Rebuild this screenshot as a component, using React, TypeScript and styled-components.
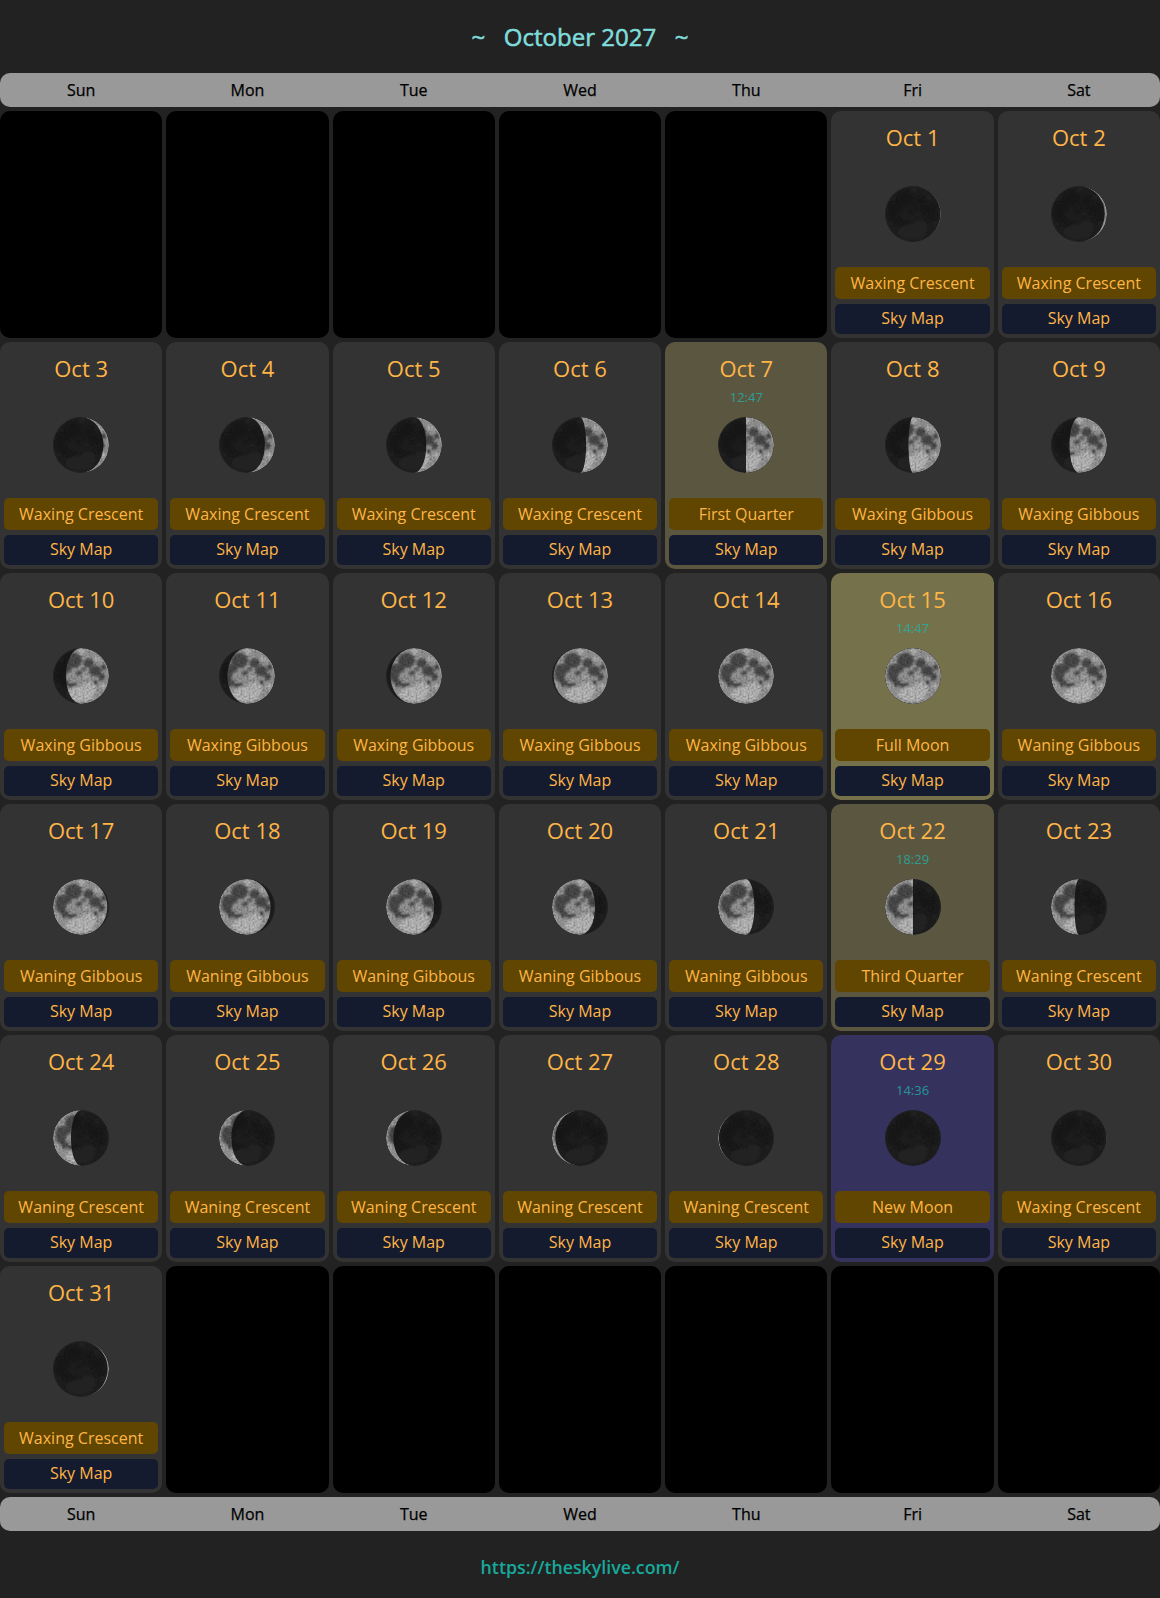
import React from "react";
import styled, { createGlobalStyle } from "styled-components";

const Global = createGlobalStyle`
  html, body { margin: 0; padding: 0; background: #222222; }
  body { font-family: "Open Sans", "Noto Sans", sans-serif; }
`;

const Page = styled.div`
  width: 1160px;
  height: 1598px;
  background: #222222;
  display: flex;
  flex-direction: column;
`;

const Title = styled.h1`
  height: 73px;
  margin: 0;
  box-sizing: border-box;
  display: flex;
  align-items: center;
  justify-content: center;
  font-size: 24px;
  font-weight: 400;
  color: #7fdcdb;
  white-space: pre;
  -webkit-text-stroke: 0.55px #7fdcdb;
`;

const WeekBar = styled.div`
  height: 34px;
  background: #999999;
  border-radius: 10px;
  display: grid;
  grid-template-columns: repeat(7, 1fr);
  column-gap: 4px;
  align-items: center;
`;

const WeekDay = styled.div`
  text-align: center;
  font-size: 16px;
  color: #000000;
  -webkit-text-stroke: 0.25px #000000;
`;

const Grid = styled.div`
  display: grid;
  grid-template-columns: repeat(7, 1fr);
  grid-auto-rows: 227px;
  gap: 4px;
  margin: 4px 0;
`;

const EmptyCell = styled.div`
  background: #000000;
  border-radius: 10px;
`;

const tones = {
  normal: "#333333",
  quarter: "#5a5640",
  full: "#75724b",
  newMoon: "#35335d",
};

type Tone = keyof typeof tones;

const DayCell = styled.div<{ $tone: Tone }>`
  background: ${(p) => tones[p.$tone]};
  border-radius: 10px;
  padding: 4px;
  box-sizing: border-box;
  display: flex;
  flex-direction: column;
  align-items: stretch;
  color: #ffb547;
`;

const DateLabel = styled.div`
  margin-top: 8px;
  height: 28px;
  line-height: 28px;
  text-align: center;
  font-size: 22px;
`;

const TimeLabel = styled.div`
  margin-top: 8px;
  height: 15px;
  line-height: 15px;
  text-align: center;
  font-size: 13px;
  color: rgba(32, 178, 170, 0.8);
`;

const MoonWrap = styled.svg`
  display: block;
  align-self: center;
  width: 56px;
  height: 56px;
  margin-top: 12px;
`;

const PhaseBadge = styled.div`
  margin-top: 25px;
  height: 32px;
  line-height: 32px;
  background: #604600;
  border-radius: 5px;
  text-align: center;
  font-size: 16px;
`;

const SkyMapLink = styled.a`
  display: block;
  margin-top: 5px;
  height: 30px;
  line-height: 28px;
  background: #151b2e;
  border-radius: 5px;
  text-align: center;
  font-size: 16px;
  color: inherit;
  text-decoration: none;
`;

const Footer = styled.div`
  flex: 1;
  display: flex;
  align-items: center;
  justify-content: center;
  padding-top: 5px;
`;

const FooterLink = styled.a`
  font-size: 17.8px;
  font-weight: 600;
  color: #17a99b;
  text-decoration: none;
`;

const maria: [number, number, number, number][] = [
  [20.6, 12.5, 8.5, 7.5],
  [35.7, 15, 5, 4.6],
  [42.2, 23, 6, 5.4],
  [50.6, 19.3, 2.4, 3],
  [8, 25, 5.5, 9],
  [14, 20, 4.5, 5],
  [12, 35, 4, 3.6],
  [20, 38.5, 4.6, 3.4],
  [26, 25, 3, 2.2],
  [48.6, 29, 3, 4],
  [42.5, 34.5, 2.2, 2.2],
  [31, 21, 2.2, 1.6],
];

const highlands: [number, number, number][] = [
  [29, 3, 3],
  [44, 11, 2.2],
  [33, 28, 1.6],
  [6, 38, 1.6],
  [50, 38, 2.2],
];

const MoonFace = ({
  day,
  base,
  edge,
  mare,
  bright,
  grain,
}: {
  day: number;
  base: string;
  edge: string;
  mare: string;
  bright: string;
  grain: boolean;
}) => (
  <g filter={grain ? `url(#grain-${day})` : undefined}>
    <circle cx="28" cy="28" r="28" fill={base} />
    <g filter={`url(#soft-${day})`}>
      {maria.map(([cx, cy, rx, ry], i) => (
        <ellipse key={i} cx={cx} cy={cy} rx={rx} ry={ry} fill={mare} />
      ))}
      <ellipse cx="27" cy="46" rx="14" ry="8" fill={bright} />
      <ellipse cx="36" cy="41" rx="7" ry="7" fill={bright} />
      {highlands.map(([cx, cy, r], i) => (
        <circle key={i} cx={cx} cy={cy} r={r} fill={bright} />
      ))}
    </g>
    <circle cx="28" cy="28" r="27.5" fill="none" stroke={edge} strokeWidth="0.8" />
  </g>
);

const Moon = ({ day, lit, waning }: { day: number; lit: number; waning: boolean }) => {
  const r = 28;
  const rx = Math.abs(1 - 2 * lit) * r;
  const sweep = lit > 0.5 ? 1 : 0;
  const d = `M28 0 A${r} ${r} 0 0 1 28 56 A${rx} ${r} 0 0 ${sweep} 28 0 Z`;
  return (
    <MoonWrap viewBox="0 0 56 56">
      <defs>
        <filter id={`soft-${day}`} x="-10%" y="-10%" width="120%" height="120%">
          <feGaussianBlur stdDeviation="1.1" />
        </filter>
        <filter id={`edge-${day}`} x="-10%" y="-10%" width="120%" height="120%">
          <feGaussianBlur stdDeviation="0.4" />
        </filter>
        <filter id={`grain-${day}`} x="0" y="0" width="100%" height="100%">
          <feTurbulence type="fractalNoise" baseFrequency="0.5" numOctaves="2" seed="4" result="n" />
          <feColorMatrix
            in="n"
            type="matrix"
            values="0 0 0 0 0  0 0 0 0 0  0 0 0 0 0  1.1 0 0 0 -0.36"
            result="dots"
          />
          <feGaussianBlur in="dots" stdDeviation="0.3" result="softDots" />
          <feComposite in="softDots" in2="SourceGraphic" operator="in" result="clipped" />
          <feMerge>
            <feMergeNode in="SourceGraphic" />
            <feMergeNode in="clipped" />
          </feMerge>
        </filter>
        <mask id={`phase-${day}`} maskUnits="userSpaceOnUse" x="0" y="0" width="56" height="56">
          <path
            d={d}
            fill="#fff"
            filter={`url(#edge-${day})`}
            transform={waning ? "translate(56 0) scale(-1 1)" : undefined}
          />
        </mask>
        <clipPath id={`disc-${day}`}>
          <circle cx="28" cy="28" r="28" />
        </clipPath>
      </defs>
      <g clipPath={`url(#disc-${day})`}>
        <MoonFace day={day} base="#1c1c1c" edge="#242424" mare="#151515" bright="#222222" grain={false} />
        <g mask={`url(#phase-${day})`}>
          <MoonFace day={day} base="#9a9a9a" edge="#a8a8a8" mare="#4e4e4e" bright="#bcbcbc" grain />
        </g>
      </g>
    </MoonWrap>
  );
};

type Day = {
  day: number;
  phase: string;
  lit: number;
  waning?: boolean;
  time?: string;
  tone?: Tone;
};

const days: Day[] = [
  { day: 1, phase: "Waxing Crescent", lit: 0.008 },
  { day: 2, phase: "Waxing Crescent", lit: 0.04 },
  { day: 3, phase: "Waxing Crescent", lit: 0.1 },
  { day: 4, phase: "Waxing Crescent", lit: 0.18 },
  { day: 5, phase: "Waxing Crescent", lit: 0.28 },
  { day: 6, phase: "Waxing Crescent", lit: 0.39 },
  { day: 7, phase: "First Quarter", lit: 0.5, time: "12:47", tone: "quarter" },
  { day: 8, phase: "Waxing Gibbous", lit: 0.58 },
  { day: 9, phase: "Waxing Gibbous", lit: 0.67 },
  { day: 10, phase: "Waxing Gibbous", lit: 0.77 },
  { day: 11, phase: "Waxing Gibbous", lit: 0.85 },
  { day: 12, phase: "Waxing Gibbous", lit: 0.92 },
  { day: 13, phase: "Waxing Gibbous", lit: 0.97 },
  { day: 14, phase: "Waxing Gibbous", lit: 0.995 },
  { day: 15, phase: "Full Moon", lit: 1, time: "14:47", tone: "full" },
  { day: 16, phase: "Waning Gibbous", lit: 0.995, waning: true },
  { day: 17, phase: "Waning Gibbous", lit: 0.97, waning: true },
  { day: 18, phase: "Waning Gibbous", lit: 0.92, waning: true },
  { day: 19, phase: "Waning Gibbous", lit: 0.86, waning: true },
  { day: 20, phase: "Waning Gibbous", lit: 0.77, waning: true },
  { day: 21, phase: "Waning Gibbous", lit: 0.65, waning: true },
  { day: 22, phase: "Third Quarter", lit: 0.5, waning: true, time: "18:29", tone: "quarter" },
  { day: 23, phase: "Waning Crescent", lit: 0.42, waning: true },
  { day: 24, phase: "Waning Crescent", lit: 0.32, waning: true },
  { day: 25, phase: "Waning Crescent", lit: 0.22, waning: true },
  { day: 26, phase: "Waning Crescent", lit: 0.13, waning: true },
  { day: 27, phase: "Waning Crescent", lit: 0.06, waning: true },
  { day: 28, phase: "Waning Crescent", lit: 0.015, waning: true },
  { day: 29, phase: "New Moon", lit: 0, time: "14:36", tone: "newMoon" },
  { day: 30, phase: "Waxing Crescent", lit: 0.004 },
  { day: 31, phase: "Waxing Crescent", lit: 0.025 },
];

const weekDays = ["Sun", "Mon", "Tue", "Wed", "Thu", "Fri", "Sat"];

const Week = () => (
  <WeekBar>
    {weekDays.map((w) => (
      <WeekDay key={w}>{w}</WeekDay>
    ))}
  </WeekBar>
);

export default function App() {
  return (
    <Page>
      <Global />
      <Title>{"~\u00a0\u00a0 October 2027 \u00a0\u00a0~"}</Title>
      <Week />
      <Grid>
        {Array.from({ length: 5 }, (_, i) => (
          <EmptyCell key={`a${i}`} />
        ))}
        {days.map((d) => (
          <DayCell key={d.day} $tone={d.tone ?? "normal"}>
            <DateLabel>Oct {d.day}</DateLabel>
            <TimeLabel>{d.time}</TimeLabel>
            <Moon day={d.day} lit={d.lit} waning={!!d.waning} />
            <PhaseBadge>{d.phase}</PhaseBadge>
            <SkyMapLink href="#">Sky Map</SkyMapLink>
          </DayCell>
        ))}
        {Array.from({ length: 6 }, (_, i) => (
          <EmptyCell key={`b${i}`} />
        ))}
      </Grid>
      <Week />
      <Footer>
        <FooterLink href="#">https://theskylive.com/</FooterLink>
      </Footer>
    </Page>
  );
}
